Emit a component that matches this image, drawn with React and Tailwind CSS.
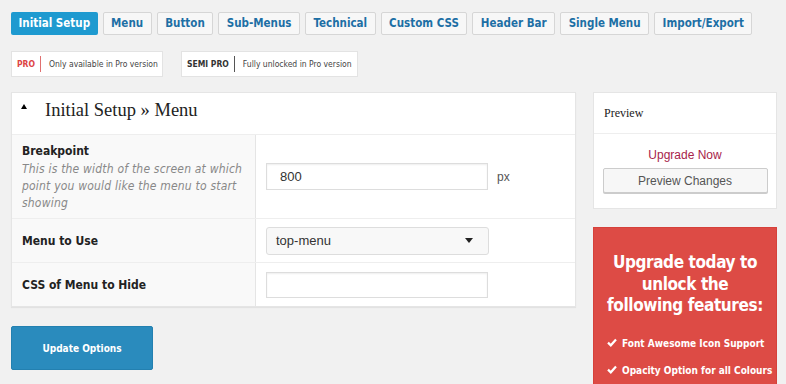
import React from 'react';

const TABS = ['Initial Setup', 'Menu', 'Button', 'Sub-Menus', 'Technical', 'Custom CSS', 'Header Bar', 'Single Menu', 'Import/Export'];

const VERDANA = { fontFamily: '"DejaVu Sans Condensed", "Liberation Sans", Tahoma, sans-serif' };

function Check() {
  return (
    <svg width="10" height="9" viewBox="0 0 10 9" className="inline-block mr-[5px] -mt-[2px]">
      <path d="M1 4.6 L3.8 7.3 L9 1.6" fill="none" stroke="#fff" strokeWidth="2.2" />
    </svg>
  );
}

function Row({ label, desc, children, className }) {
  return (
    <div className={`flex border-t border-[#eeeeee] ${className}`}>
      <div className="w-[244px] bg-[#f9f9f9] border-r border-[#e5e5e5] px-[10px] flex flex-col justify-center">
        <div className="font-bold text-[12px] text-[#222]">{label}</div>
        {desc && <div className="italic text-[12px] tracking-[0.2px] leading-[17px] text-[#888] mt-[1px] whitespace-nowrap">{desc}</div>}
      </div>
      <div className="flex-1 bg-white px-[10px] flex items-center">{children}</div>
    </div>
  );
}

export default function App() {
  return (
    <div className="w-[786px] h-[384px] overflow-hidden bg-[#f1f1f1] pl-[11px] pt-[12px]" style={VERDANA}>
      {/* tabs */}
      <div className="flex gap-[5px] whitespace-nowrap">
        {TABS.map((t, i) => (
          <div
            key={t}
            className={
              i === 0
                ? 'h-[23px] px-[7.5px] flex items-center rounded-[2px] bg-[#1e9ad0] text-white font-bold text-[11.5px]'
                : 'h-[23px] px-[7.5px] flex items-center rounded-[2px] border border-[#d6d6d6] bg-[#f7f7f7] text-[#1d6fa5] font-bold text-[11.5px]'
            }
          >
            {t}
          </div>
        ))}
      </div>

      {/* legend */}
      <div className="flex gap-[18px] mt-[16px] whitespace-nowrap">
        <div className="w-[152px] h-[26px] bg-white border border-[#e3e3e3] flex items-center pl-[5px] text-[8.5px]">
          <span className="font-bold text-[#dd4444]">PRO</span>
          <span className="w-[1px] h-[16px] bg-[#e07070] ml-[5px] mr-[8px]" />
          <span className="text-[#444]">Only available in Pro version</span>
        </div>
        <div className="w-[177px] h-[26px] bg-white border border-[#e3e3e3] flex items-center pl-[5px] text-[8.5px]">
          <span className="font-bold text-[#333]">SEMI PRO</span>
          <span className="w-[1px] h-[16px] bg-[#555] ml-[5px] mr-[8px]" />
          <span className="text-[#444]">Fully unlocked in Pro version</span>
        </div>
      </div>

      <div className="flex items-start mt-[15px]">
        {/* main panel */}
        <div className="w-[565px]">
          <div className="bg-white border border-[#e5e5e5] shadow-[0_1px_1px_rgba(0,0,0,0.06)]">
            <div className="h-[41px] flex items-center pl-[9px] pb-[5px]">
              <svg width="6" height="5" viewBox="0 0 6 5" className="-mt-[10px]">
                <path d="M0 5 L3 0 L6 5 Z" fill="#000" />
              </svg>
              <span className="ml-[18px] text-[18.5px] text-[#222]" style={{ fontFamily: '"Liberation Serif", "Times New Roman", serif' }}>
                Initial Setup » Menu
              </span>
            </div>
            <Row
              className="h-[84px]"
              label="Breakpoint"
              desc={<>This is the width of the screen at which<br />point you would like the menu to start<br />showing</>}
            >
              <input
                readOnly
                value="800"
                className="w-[222px] h-[27px] border border-[#dddddd] shadow-[inset_0_1px_2px_rgba(0,0,0,0.07)] px-[13px] text-[13px] text-[#333] outline-none"
                style={{ fontFamily: '"Liberation Sans", Arial, sans-serif' }}
              />
              <span className="ml-[9px] text-[12px] text-[#555]" style={{ fontFamily: '"Liberation Sans", Arial, sans-serif' }}>px</span>
            </Row>
            <Row className="h-[44px]" label="Menu to Use">
              <div
                className="w-[223px] h-[28px] rounded-[3px] border border-[#dddddd] bg-[#f8f8f8] flex items-center justify-between pl-[9px] pr-[15px] text-[13px] text-[#333]"
                style={{ fontFamily: '"Liberation Sans", Arial, sans-serif' }}
              >
                top-menu
                <svg width="8" height="5" viewBox="0 0 8 5"><path d="M0 0 L8 0 L4 5 Z" fill="#222" /></svg>
              </div>
            </Row>
            <Row className="h-[44px]" label="CSS of Menu to Hide">
              <div className="w-[222px] h-[26px] border border-[#dddddd] bg-white shadow-[inset_0_1px_2px_rgba(0,0,0,0.07)]" />
            </Row>
          </div>
          <button className="mt-[19px] w-[142px] h-[44px] rounded-[2px] bg-[#2a8bbd] border border-[#2380b0] text-white font-bold text-[10px]">
            Update Options
          </button>
        </div>

        {/* sidebar */}
        <div className="ml-[17px] w-[184px]">
          <div className="bg-white border border-[#e5e5e5] h-[117px]">
            <div className="h-[41px] border-b border-[#eeeeee] flex items-center pl-[10px] text-[12px] text-[#222]" style={{ fontFamily: '"Liberation Serif", "Times New Roman", serif' }}>
              Preview
            </div>
            <div className="flex flex-col items-center pt-[14px]" style={{ fontFamily: '"Liberation Sans", Arial, sans-serif' }}>
              <div className="text-[12px] text-[#a8234a] leading-[15px]">Upgrade Now</div>
              <div className="mt-[5px] w-[165px] h-[25px] rounded-[2px] border border-[#cccccc] bg-[#f7f7f7] shadow-[0_1px_0_#ccc] flex items-center justify-center text-[12px] text-[#555]">
                Preview Changes
              </div>
            </div>
          </div>
          <div className="mt-[18px] bg-[#dd4b45] border border-[#d6413b] h-[200px] text-white font-bold pt-[24px] whitespace-nowrap">
            <div className="text-center text-[17px] tracking-[-0.4px] leading-[21.5px]">
              Upgrade today to<br />unlock the<br />following features:
            </div>
            <div className="mt-[13px] pl-[13px] text-[10px] leading-[27px]">
              <div><Check />Font Awesome Icon Support</div>
              <div><Check />Opacity Option for all Colours</div>
            </div>
          </div>
        </div>
      </div>
    </div>
  );
}
